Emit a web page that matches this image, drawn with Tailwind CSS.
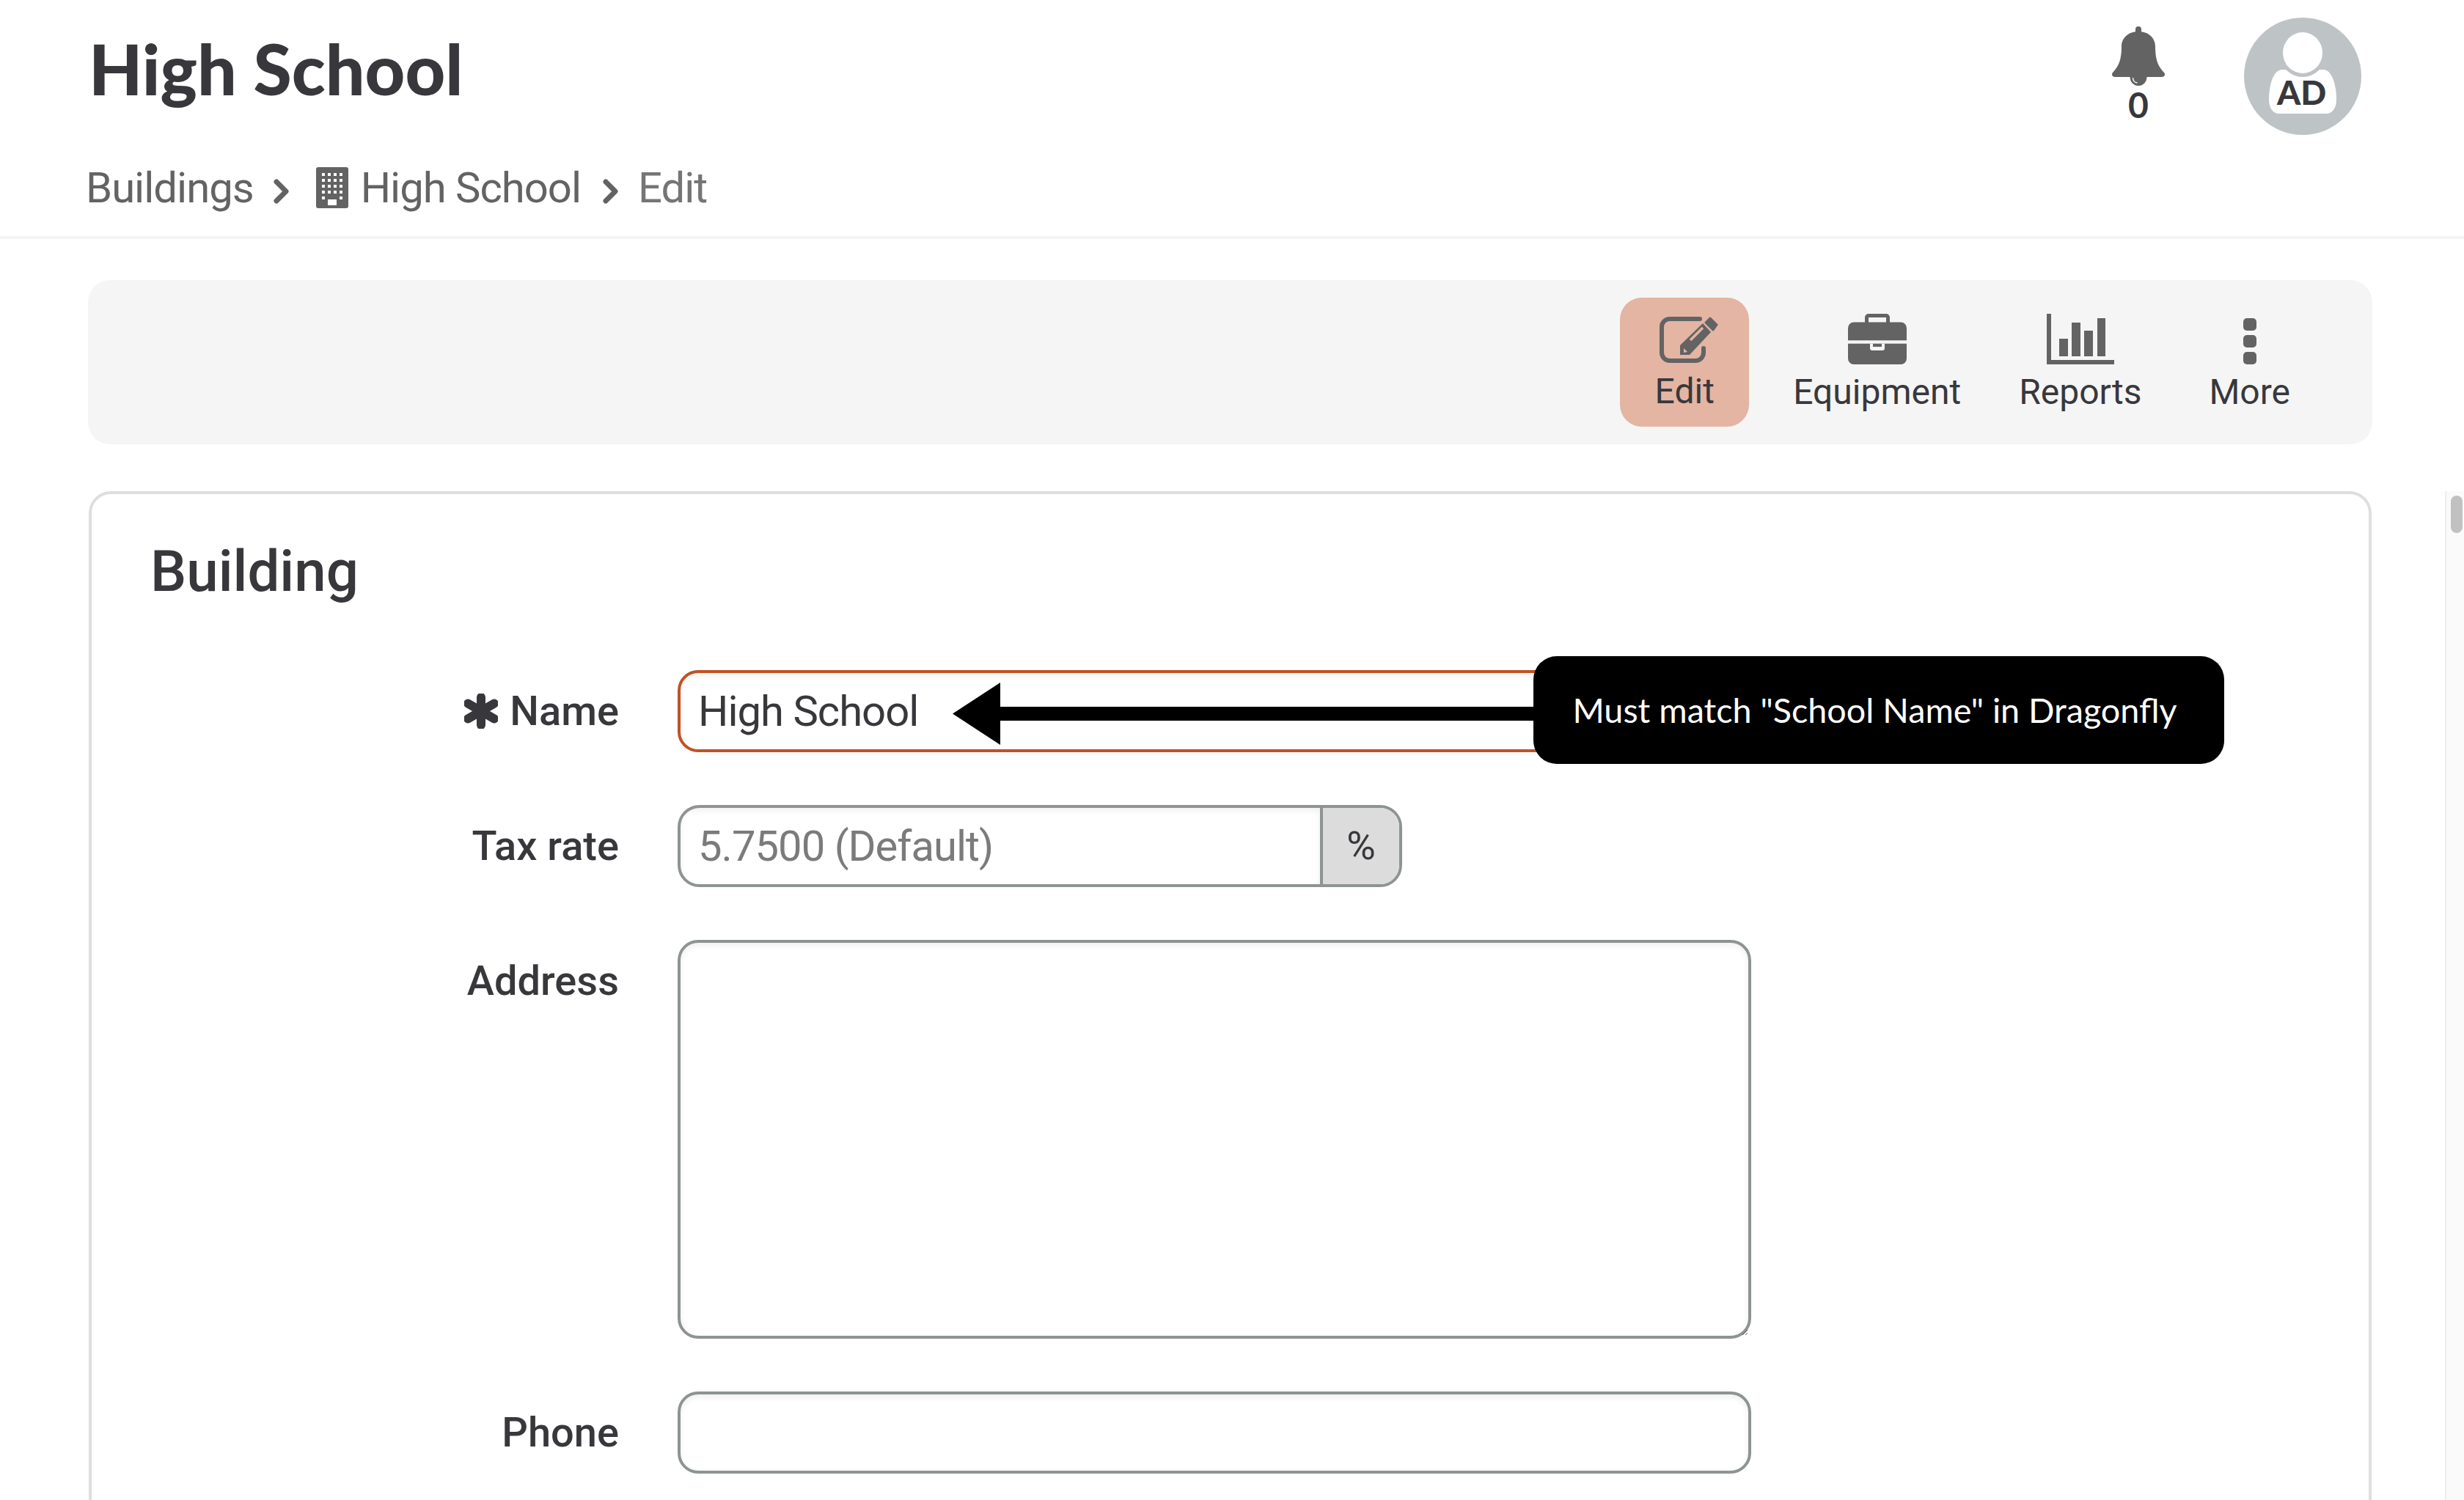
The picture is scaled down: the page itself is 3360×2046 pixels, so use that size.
<!DOCTYPE html>
<html lang="en">
  <head>
    <meta charset="UTF-8" />
    <title>High School - Edit</title>
    <script src="https://cdn.jsdelivr.net/npm/@tailwindcss/browser@4"></script>
  </head>
  <body class="bg-white font-[Roboto,sans-serif] text-[#38383c]">
    <div class="relative w-[3360px] h-[2046px] overflow-hidden">
      <!-- Header -->
      <header class="flex justify-between h-[326px] border-b-4 border-[#f4f4f4]">
        <div class="pl-[117px]">
          <h1 class="pl-[4px] pt-[41px] font-[Lato,sans-serif] font-black text-[95px] leading-[104px]">High School</h1>
          <nav class="flex items-center mt-[76px] text-[58px] tracking-[-1px] leading-[70px] text-[#636363]">
            <span>Buildings</span>
            <svg class="ml-[27px] mt-[10px] w-[22px] h-[34px]" viewBox="0 0 22 34"><path d="M4 4l13 13L4 30" fill="none" stroke="#636363" stroke-width="7" stroke-linecap="round" stroke-linejoin="round" /></svg>
            <svg class="ml-[36px] mr-[17px] w-[44px] h-[56px]" viewBox="0 0 44 56">
              <rect width="44" height="56" rx="3" fill="#636363" />
              <g fill="#fff">
                <rect x="8" y="8" width="4" height="4" /><rect x="16" y="8" width="4" height="4" /><rect x="24" y="8" width="4" height="4" /><rect x="32" y="8" width="4" height="4" />
                <rect x="8" y="16" width="4" height="4" /><rect x="16" y="16" width="4" height="4" /><rect x="24" y="16" width="4" height="4" /><rect x="32" y="16" width="4" height="4" />
                <rect x="8" y="24" width="4" height="4" /><rect x="16" y="24" width="4" height="4" /><rect x="24" y="24" width="4" height="4" /><rect x="32" y="24" width="4" height="4" />
                <rect x="8" y="32" width="4" height="4" /><rect x="16" y="32" width="4" height="4" /><rect x="24" y="32" width="4" height="4" /><rect x="32" y="32" width="4" height="4" />
                <rect x="8" y="40" width="4" height="4" /><rect x="32" y="40" width="4" height="4" />
                <rect x="16" y="44" width="12" height="8" />
              </g>
            </svg>
            <span>High School</span>
            <svg class="ml-[30px] mt-[10px] w-[22px] h-[34px]" viewBox="0 0 22 34"><path d="M4 4l13 13L4 30" fill="none" stroke="#636363" stroke-width="7" stroke-linecap="round" stroke-linejoin="round" /></svg>
            <span class="ml-[26px] text-[#757575]">Edit</span>
          </nav>
        </div>
        <div class="flex items-start gap-[107px] pr-[140px]">
          <div class="flex flex-col items-center pt-[36px]">
            <svg class="w-[74px] h-[81px]" viewBox="0 0 74 81">
              <rect x="33" y="0" width="8" height="12" rx="4" fill="#636363" />
              <path d="M37 7C22 7 14 17 14 27C14 48 9 55 2 63C0 65 1 69 5 69H69C73 69 74 65 72 63C65 55 60 48 60 27C60 17 52 7 37 7Z" fill="#636363" />
              <path d="M25.5 69a11.5 12 0 0 0 23 0Z" fill="#636363" />
              <path d="M29.500 70c0 4 2.500 6.500 6 7" fill="none" stroke="#fff" stroke-width="1.300" />
            </svg>
            <span class="mt-[2px] font-[Lato,sans-serif] font-bold text-[48px] leading-[48px]">0</span>
          </div>
          <div class="relative mt-[24px] w-[160px] h-[160px]">
            <svg class="w-[160px] h-[160px]" viewBox="0 0 160 160">
              <circle cx="80" cy="80" r="80" fill="#bec3c6" />
              <path d="M52 71H108C120 71 126 92 126 112C126 124 120 131 112 131H48C40 131 34 124 34 112C34 92 40 71 52 71Z" fill="#fff" />
              <ellipse cx="80" cy="48" rx="32" ry="33" fill="#bec3c6" />
              <ellipse cx="80" cy="48" rx="27" ry="28" fill="#fff" />
            </svg>
            <span class="absolute left-[45px] top-[74px] font-[Lato,sans-serif] font-black text-[46px] leading-[56px]">AD</span>
          </div>
        </div>
      </header>

      <main class="ml-[120px] w-[3115px]">
        <!-- Toolbar -->
        <div class="flex justify-end items-center h-[224px] mt-[56px] pr-[112px] rounded-[30px] bg-[#f5f5f5] text-[48px] leading-[56px]">
          <a class="flex flex-col items-center justify-start w-[176px] h-[176px] pt-[26px] rounded-[30px] bg-[#e3b5a2]">
            <svg class="ml-[12px] w-[80px] h-[63px]" viewBox="0 0 80 63">
              <path d="M55 3H14A11 11 0 0 0 3 14V49A11 11 0 0 0 14 60H49A11 11 0 0 0 60 49V43" fill="none" stroke="#636363" stroke-width="6" stroke-linecap="round" />
              <path d="M28 39L59 9L70 21L41 52H28Z" fill="#636363" />
              <path d="M63 8L69 2L78 11L73 18Z" fill="#636363" stroke="#636363" stroke-width="3" stroke-linejoin="round" />
              <path d="M42 32L59 15" stroke="#e3b5a2" stroke-width="3.500" />
              <path d="M33 43L38 48L33 49Z" fill="#e3b5a2" />
            </svg>
            <span class="mt-[11px]">Edit</span>
          </a>
          <a class="flex flex-col items-center ml-[60px] pt-[2px]">
            <svg class="w-[80px] h-[69px]" viewBox="0 0 80 69">
              <path d="M23 14V5a5 5 0 0 1 5-5H52a5 5 0 0 1 5 5V14H52V5H28V14Z" fill="#636363" />
              <rect x="0" y="11.500" width="80" height="57.500" rx="8" fill="#636363" />
              <rect x="0" y="36.300" width="80" height="4.400" fill="#f5f5f5" />
              <path d="M30 40.700V47a3 3 0 0 0 3 3H47a3 3 0 0 0 3-3V40.700H46V45H34V40.700Z" fill="#f5f5f5" />
            </svg>
            <span class="mt-[10px]">Equipment</span>
          </a>
          <a class="flex flex-col items-center ml-[79px] pt-[2px]">
            <svg class="w-[92px] h-[69px]" viewBox="0 0 92 69">
              <path d="M0 0H6V63H92V69H0Z" fill="#636363" />
              <rect x="17" y="34" width="12" height="24" fill="#636363" />
              <rect x="34" y="12" width="12" height="46" fill="#636363" />
              <rect x="51" y="23" width="12" height="35" fill="#636363" />
              <rect x="69" y="6" width="11" height="52" fill="#636363" />
            </svg>
            <span class="mt-[10px]">Reports</span>
          </a>
          <a class="flex flex-col items-center ml-[92px] pt-[2px]">
            <svg class="w-[18px] h-[69px]" viewBox="0 0 18 69">
              <rect y="6" width="18" height="17" rx="5" fill="#636363" />
              <rect y="29" width="18" height="17" rx="5" fill="#636363" />
              <rect y="52" width="18" height="17" rx="5" fill="#636363" />
            </svg>
            <span class="mt-[10px]">More</span>
          </a>
        </div>

        <!-- Form card -->
        <section class="mx-px mt-[64px] h-[1500px] px-[80px] border-4 border-[#dedede] rounded-[30px]">
          <h2 class="pt-[61px] font-medium text-[78px] leading-[90px]">Building</h2>
          <form class="flex flex-col gap-[72px] mt-[89px] text-[58px] tracking-[-1px]">
            <div class="flex items-center gap-[80px]">
              <label class="flex items-center justify-end gap-[16px] w-[639px] font-medium text-[56px] tracking-normal leading-[112px]">
                <svg class="w-[46px] h-[48px]" viewBox="0 0 46 48">
                  <path d="M23 5V43M5 13.500L41 34.500M41 13.500L5 34.500" fill="none" stroke="#38383c" stroke-width="12" stroke-linecap="round" />
                </svg>
                Name
              </label>
              <input type="text" value="High School" class="w-[1464px] h-[112px] px-6 border-4 border-[#bf5227] rounded-[28px] shadow-[inset_0_3px_8px_rgba(60,30,30,0.08)] outline-none" />
            </div>
            <div class="flex items-center gap-[80px]">
              <label class="w-[639px] text-right font-medium text-[56px] tracking-normal leading-[112px]">Tax rate</label>
              <div class="flex w-[988px] h-[112px] border-4 border-[#8e9393] rounded-[30px] overflow-hidden">
                <input type="text" placeholder="5.7500 (Default)" class="flex-1 min-w-0 px-6 shadow-[inset_0_3px_8px_rgba(60,30,30,0.08)] outline-none placeholder:text-[#7b7b7b]" />
                <span class="flex items-center justify-center w-[108px] pb-[2px] border-l-4 border-[#8e9393] bg-[#dcdcdc] text-[54px] tracking-normal">%</span>
              </div>
            </div>
            <div class="flex items-start gap-[80px]">
              <label class="w-[639px] text-right font-medium text-[56px] tracking-normal leading-[112px]">Address</label>
              <textarea class="block w-[1464px] h-[544px] px-6 border-4 border-[#8e9393] rounded-[28px] shadow-[inset_0_3px_8px_rgba(60,30,30,0.08)] outline-none"></textarea>
            </div>
            <div class="flex items-center gap-[80px]">
              <label class="w-[639px] text-right font-medium text-[56px] tracking-normal leading-[112px]">Phone</label>
              <input type="text" class="w-[1464px] h-[112px] px-6 border-4 border-[#8e9393] rounded-[28px] shadow-[inset_0_3px_8px_rgba(60,30,30,0.08)] outline-none" />
            </div>
          </form>
        </section>
      </main>

      <!-- Callout arrow and tooltip over the name field -->
      <svg class="absolute left-[1299px] top-[931px] w-[800px] h-[85px]" viewBox="0 0 800 85">
        <path d="M0 42.500L65 0V33H800V52H65V85Z" fill="#000" />
      </svg>
      <div class="absolute left-[2091px] top-[895px] flex items-center justify-center w-[942px] h-[147px] pr-[11px] rounded-[32px] bg-black text-white font-[Lato,sans-serif] text-[46.7px]">Must match "School Name" in Dragonfly</div>

      <!-- Scrollbar -->
      <div class="absolute right-0 top-[670px] bottom-0 w-[26px] bg-[#fafafa] border-l-2 border-[#eeeeee]">
        <div class="mt-[6px] ml-[6px] w-4 h-[51px] rounded-full bg-[#c1c1c1]"></div>
      </div>
    </div>
  </body>
</html>
